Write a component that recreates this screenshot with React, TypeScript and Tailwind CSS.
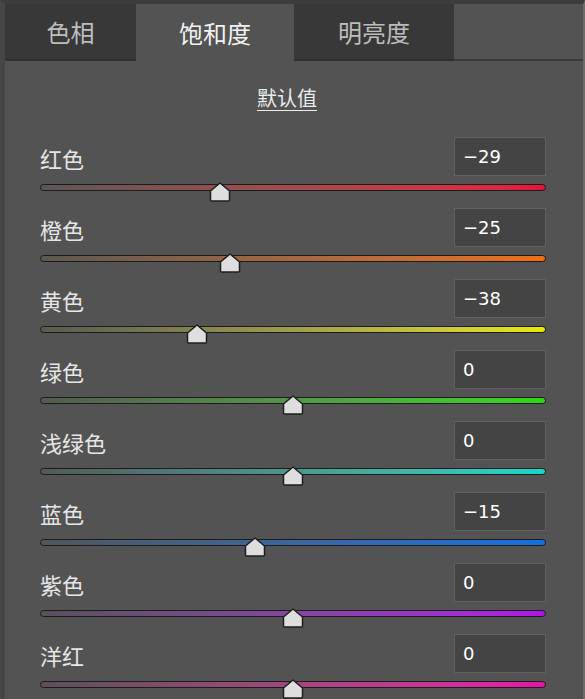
import React from 'react';

const FONT = '"Noto Sans CJK SC", "Noto Sans", sans-serif';

const tabs = [
  { label: '色相', w: 'w-[131px]', active: false },
  { label: '饱和度', w: 'w-[158px]', active: true },
  { label: '明亮度', w: 'w-[160px]', active: false },
];

const rows = [
  { label: '红色', value: -29, from: '#5c5656', to: '#e8103c', track: 'bg-linear-to-r from-[#5c5656] to-[#e8103c]' },
  { label: '橙色', value: -25, from: '#5c5850', to: '#f07010', track: 'bg-linear-to-r from-[#5c5850] to-[#f07010]' },
  { label: '黄色', value: -38, from: '#5a5a50', to: '#e8e800', track: 'bg-linear-to-r from-[#5a5a50] to-[#e8e800]' },
  { label: '绿色', value: 0, from: '#535a50', to: '#30d810', track: 'bg-linear-to-r from-[#535a50] to-[#30d810]' },
  { label: '浅绿色', value: 0, from: '#505a58', to: '#10d8c8', track: 'bg-linear-to-r from-[#505a58] to-[#10d8c8]' },
  { label: '蓝色', value: -15, from: '#50565c', to: '#1070e0', track: 'bg-linear-to-r from-[#50565c] to-[#1070e0]' },
  { label: '紫色', value: 0, from: '#58505c', to: '#b010e8', track: 'bg-linear-to-r from-[#58505c] to-[#b010e8]' },
  { label: '洋红', value: 0, from: '#5c5058', to: '#e810a8', track: 'bg-linear-to-r from-[#5c5058] to-[#e810a8]' },
];

function Thumb() {
  return (
    <svg width="24" height="20" viewBox="0 0 24 20">
      <path d="M12 1 L21.5 9 V18 Q21.5 19 20.5 19 H3.5 Q2.5 19 2.5 18 V9 Z" fill="#dedede" stroke="#1e1e1e" strokeWidth="1.5" strokeLinejoin="round" />
    </svg>
  );
}

function Row({ label, value, track }: { label: string; value: number; track: string }) {
  // thumb centre: -100..100 across the 506px track
  const left = 253 + (value / 100) * 253 - 12;
  return (
    <div className="h-[71px] flex flex-col">
      <div className="h-[39px] flex items-center justify-between">
        <span className="text-[22px] text-[#e6e6e6] leading-none pt-[2px]">{label}</span>
        <div className="w-[92px] h-[39px] bg-[#444444] border border-[#606060] flex items-center pl-[8px] text-[18px] text-white" style={{ fontFamily: '"DejaVu Sans", sans-serif' }}>
          {value < 0 ? `−${-value}` : value}
        </div>
      </div>
      <div className="relative h-[32px]">
        <div className={`absolute left-0 right-0 top-[8px] h-[7px] rounded-full border border-[#1c1c1c] ${track}`} />
        <div className="absolute top-[6px]" style={{ left }}>
          <Thumb />
        </div>
      </div>
    </div>
  );
}

export default function App() {
  return (
    <div className="w-[585px] h-[699px] bg-[#535353] overflow-hidden flex flex-col border-t-4 border-l-[5px] border-r-2 border-t-[#3c3c3c] border-l-[#464646] border-r-[#6a6a6a]" style={{ fontFamily: FONT }}>
      <div className="h-[57px] flex shrink-0">
        {tabs.map(t => (
          <div key={t.label}
            className={`${t.w} h-full flex items-center justify-center text-[24px] ${t.active ? 'bg-[#535353] text-[#f2f2f2]' : 'bg-[#383838] text-[#bdbdbd] border-b-2 border-[#303030]'}`}>
            {t.label}
          </div>
        ))}
        <div className="flex-1 border-b-2 border-[#3a3a3a]" />
      </div>
      <div className="h-[76px] shrink-0 flex items-center justify-center pb-[2px]">
        <span className="text-[20px] text-[#ececec] underline underline-offset-4 decoration-1 ml-[-14px]">默认值</span>
      </div>
      <div className="pl-[35px] pr-[37px]">
        {rows.map(r => (
          <Row key={r.label} label={r.label} value={r.value} track={r.track} />
        ))}
      </div>
    </div>
  );
}
